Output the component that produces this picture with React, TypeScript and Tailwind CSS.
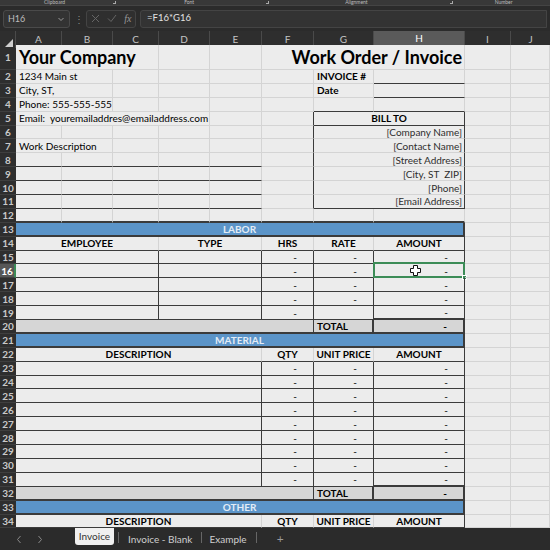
import React from 'react';

type Edge = 'g' | 'd' | 't';
type Align = 'l' | 'c' | 'r' | 'd';

const COLS =
  'grid grid-cols-[16px_46px_51px_46px_51px_52px_52px_60px_91px_46px_39px]';

const bottomCls: Record<Edge, string> = {
  g: 'border-b border-b-[#d4d4d4]',
  d: 'border-b border-b-[#3b3b3b]',
  t: 'border-b-2 border-b-[#3b3b3b]',
};
const rightCls: Record<Edge, string> = {
  g: 'border-r border-r-[#d4d4d4]',
  d: 'border-r border-r-[#3b3b3b]',
  t: 'border-r-2 border-r-[#3b3b3b]',
};
const spanCls: Record<number, string> = {
  1: 'col-span-1',
  2: 'col-span-2',
  3: 'col-span-3',
  4: 'col-span-4',
  5: 'col-span-5',
  6: 'col-span-6',
  8: 'col-span-8',
};
const alignCls: Record<Align, string> = {
  l: 'justify-start pl-[3px]',
  c: 'justify-center',
  r: 'justify-end pr-[2px]',
  d: 'justify-end pr-[16px]',
};

interface CellProps {
  span?: number;
  b?: Edge;
  r?: Edge;
  a?: Align;
  className?: string;
  children?: React.ReactNode;
}

const Cell: React.FC<CellProps> = ({ span = 1, b = 'g', r = 'g', a = 'l', className = '', children }) => (
  <div
    className={`${spanCls[span]} ${bottomCls[b]} ${rightCls[r]} ${alignCls[a]} relative flex min-w-0 items-center whitespace-pre ${className}`}
  >
    {children}
  </div>
);

const Row: React.FC<{ n: number; active?: boolean; tall?: boolean; children?: React.ReactNode }> = ({
  n,
  active,
  tall,
  children,
}) => (
  <div className={`${COLS} ${tall ? 'h-[25px]' : 'h-[13.9px]'}`}>
    <div
      className={`flex items-center justify-center border-b border-b-[#3f3f3f] text-[10px] font-bold ${
        active ? 'border-r-2 border-r-[#3c8c57] bg-[#575757] text-white' : 'bg-[#2e2e2e] text-[#c9c9c9]'
      }`}
    >
      {n}
    </div>
    {children}
    <Cell />
    <Cell />
  </div>
);

const Bar: React.FC<{ label: string }> = ({ label }) => (
  <Cell span={8} b="t" r="t" a="c" className="bg-[#5b94c8] text-[10px] font-bold text-[#e3ecf6]">
    {label}
  </Cell>
);

const Selection = () => (
  <>
    <div className="pointer-events-none absolute -left-[1px] -top-[2px] bottom-[-1px] right-[-1px] border-2 border-[#3c8c57]" />
    <div className="absolute -bottom-[3px] -right-[3px] h-[5px] w-[5px] border border-white bg-[#3c8c57]" />
    <svg className="absolute left-[36px] top-[1px]" width="11" height="11" viewBox="0 0 11 11">
      <path
        d="M3.5 0.5h4v3h3v4h-3v3h-4v-3h-3v-4h3z"
        fill="#fff"
        stroke="#111"
        strokeWidth="1"
      />
    </svg>
  </>
);

const Dash = '-';

const Chevron: React.FC<{ dir: 'l' | 'r' }> = ({ dir }) => (
  <svg width="6" height="9" viewBox="0 0 6 9">
    <path d={dir === 'l' ? 'M4.5 1L1.5 4.5 4.5 8' : 'M1.5 1l3 3.5-3 3.5'} fill="none" stroke="#8a8a8a" strokeWidth="1" />
  </svg>
);

export default function App() {
  const labor = [15, 16, 17, 18, 19];
  const material = [23, 24, 25, 26, 27, 28, 29, 30, 31];

  return (
    <div
      className="flex h-[550px] w-[550px] flex-col overflow-hidden bg-[#2b2b2b] text-black"
      style={{ fontFamily: 'Lato, "Open Sans", Arial, sans-serif' }}
    >
      {/* ribbon group labels */}
      <div className="flex h-[6px] items-center border-b border-[#444] bg-[#383838] text-[5px] leading-none text-[#bdbdbd]">
        <span className="ml-[44px]">Clipboard</span>
        <span className="ml-[48px] h-[3px] w-[3px] border-b border-r border-[#aaa]" />
        <span className="ml-[68px]">Font</span>
        <span className="ml-[72px] h-[3px] w-[3px] border-b border-r border-[#aaa]" />
        <span className="ml-[76px]">Alignment</span>
        <span className="ml-[82px] h-[3px] w-[3px] border-b border-r border-[#aaa]" />
        <span className="ml-[42px]">Number</span>
      </div>

      {/* formula bar */}
      <div className="flex h-[25px] items-center gap-[4px] px-[3px]">
        <div className="flex h-[18px] w-[67px] items-center justify-between rounded-[3px] border border-[#4a4a4a] bg-[#333] px-[4px] text-[9px] text-[#bcbcbc]">
          <span>H16</span>
          <svg width="8" height="8" viewBox="0 0 8 8">
            <path d="M1.5 3l2.5 2.5 2.5-2.5" fill="none" stroke="#999" strokeWidth="1" />
          </svg>
        </div>
        <span className="w-[8px] text-center text-[10px] leading-none text-[#888]">⋮</span>
        <div className="flex h-[18px] w-[50px] items-center justify-around rounded-[3px] border border-[#444] bg-[#2f2f2f] text-[#666]">
          <svg width="9" height="9" viewBox="0 0 9 9">
            <path d="M1 1l7 7M8 1l-7 7" stroke="#666" strokeWidth="1" />
          </svg>
          <svg width="10" height="9" viewBox="0 0 10 9">
            <path d="M1 4.5l3 3 5-6.5" fill="none" stroke="#666" strokeWidth="1" />
          </svg>
          <span className="text-[10px] italic leading-none text-[#999]" style={{ fontFamily: '"Liberation Serif", serif' }}>
            fx
          </span>
        </div>
        <div className="flex h-[18px] flex-1 items-center rounded-l-[3px] border border-[#444] bg-[#333] px-[6px] text-[9.5px] text-[#e2e2e2]">
          =F16*G16
        </div>
      </div>

      {/* column headers */}
      <div className={`${COLS} h-[14px] bg-[#2e2e2e] text-[10px] text-[#c4c4c4]`}>
        <div className="relative border-r border-[#4a4a4a]">
          <svg className="absolute bottom-[1px] right-[2px]" width="8" height="8" viewBox="0 0 8 8">
            <path d="M8 0v8h-8z" fill="#cfcfcf" />
          </svg>
        </div>
        {['A', 'B', 'C', 'D', 'E', 'F', 'G'].map((c) => (
          <div key={c} className="flex items-center justify-center border-r border-[#4a4a4a]">
            {c}
          </div>
        ))}
        <div className="flex items-center justify-center border-b-2 border-r border-b-[#3c8c57] border-r-[#4a4a4a] bg-[#5a5a5a] text-white">
          H
        </div>
        <div className="flex items-center justify-center border-r border-[#4a4a4a]">I</div>
        <div className="flex items-center justify-center">J</div>
      </div>

      {/* sheet */}
      <div className="bg-[#ececec] text-[10px] leading-none">
        <Row n={1} tall>
          <Cell span={3} className="text-[18px] font-bold">Your Company</Cell>
          <Cell />
          <Cell />
          <Cell span={3} a="r" className="text-[18px] font-bold">Work Order / Invoice</Cell>
        </Row>
        <Row n={2}>
          <Cell span={2}>1234 Main st</Cell>
          <Cell /><Cell /><Cell /><Cell />
          <Cell className="font-bold">INVOICE #</Cell>
          <Cell b="d" />
        </Row>
        <Row n={3}>
          <Cell span={2}>City, ST,</Cell>
          <Cell /><Cell /><Cell /><Cell />
          <Cell className="font-bold">Date</Cell>
          <Cell b="d" />
        </Row>
        <Row n={4}>
          <Cell span={2}>Phone: 555-555-555</Cell>
          <Cell /><Cell /><Cell /><Cell />
          <Cell b="d" />
          <Cell b="d" />
        </Row>
        <Row n={5}>
          <Cell span={4}>Email:  youremailaddres@emailaddress.com</Cell>
          <Cell />
          <Cell r="d" />
          <Cell span={2} b="d" r="d" a="c" className="font-bold">BILL TO</Cell>
        </Row>
        {['[Company Name]', '[Contact Name]', '[Street Address]', '[City, ST  ZIP]', '[Phone]', '[Email Address]'].map(
          (t, i) => {
            const n = i + 6;
            const line: Edge = n >= 8 ? 'd' : 'g';
            return (
              <Row n={n} key={n}>
                {n === 7 ? (
                  <Cell span={2}>Work Description</Cell>
                ) : (
                  <>
                    <Cell b={line} />
                    <Cell b={line} />
                  </>
                )}
                <Cell b={line} />
                <Cell b={line} />
                <Cell b={line} />
                <Cell r="d" />
                <Cell span={2} b={n === 11 ? 'd' : 'g'} r="d" a="r" className="text-[#2e2e2e]">
                  {t}
                </Cell>
              </Row>
            );
          }
        )}
        <Row n={12}>
          <Cell b="t" /><Cell b="t" /><Cell b="t" /><Cell b="t" /><Cell b="t" /><Cell b="t" /><Cell b="t" /><Cell b="t" />
        </Row>
        <Row n={13}>
          <Bar label="LABOR" />
        </Row>
        <Row n={14}>
          <Cell span={3} b="d" a="c" className="font-bold">EMPLOYEE</Cell>
          <Cell span={2} b="d" a="c" className="font-bold">TYPE</Cell>
          <Cell b="d" a="c" className="font-bold">HRS</Cell>
          <Cell b="d" a="c" className="font-bold">RATE</Cell>
          <Cell b="d" r="d" a="c" className="font-bold">AMOUNT</Cell>
        </Row>
        {labor.map((n) => (
          <Row n={n} key={n} active={n === 16}>
            <Cell span={3} b="d" r="d" />
            <Cell span={2} b="d" r="d" />
            <Cell b="d" r="d" a="d">{Dash}</Cell>
            <Cell b="d" r="d" a="d">{n === 19 ? '' : Dash}</Cell>
            <Cell b={n === 19 ? 't' : 'd'} r="d" a="d">
              {Dash}
              {n === 16 && <Selection />}
            </Cell>
          </Row>
        ))}
        <Row n={20}>
          <Cell span={6} b="t" r="d" className="bg-[#d6d6d6]" />
          <Cell b="t" r="t" className="bg-[#d6d6d6] font-bold">TOTAL</Cell>
          <Cell b="t" r="t" a="d" className="bg-[#d6d6d6] font-bold">{Dash}</Cell>
        </Row>
        <Row n={21}>
          <Bar label="MATERIAL" />
        </Row>
        <Row n={22}>
          <Cell span={5} b="d" a="c" className="font-bold">DESCRIPTION</Cell>
          <Cell b="d" a="c" className="font-bold">QTY</Cell>
          <Cell b="d" a="c" className="font-bold">UNIT PRICE</Cell>
          <Cell b="d" r="d" a="c" className="font-bold">AMOUNT</Cell>
        </Row>
        {material.map((n) => (
          <Row n={n} key={n}>
            <Cell span={5} b="d" r="d" />
            <Cell b="d" r="d" a="d">{Dash}</Cell>
            <Cell b="d" r="d" a="d">{Dash}</Cell>
            <Cell b={n === 31 ? 't' : 'd'} r="d" a="d">{Dash}</Cell>
          </Row>
        ))}
        <Row n={32}>
          <Cell span={6} b="t" r="d" className="bg-[#d6d6d6]" />
          <Cell b="t" r="t" className="bg-[#d6d6d6] font-bold">TOTAL</Cell>
          <Cell b="t" r="t" a="d" className="bg-[#d6d6d6] font-bold">{Dash}</Cell>
        </Row>
        <Row n={33}>
          <Bar label="OTHER" />
        </Row>
        <Row n={34}>
          <Cell span={5} b="d" a="c" className="font-bold">DESCRIPTION</Cell>
          <Cell b="d" a="c" className="font-bold">QTY</Cell>
          <Cell b="d" a="c" className="font-bold">UNIT PRICE</Cell>
          <Cell b="d" r="d" a="c" className="font-bold">AMOUNT</Cell>
        </Row>
      </div>

      {/* sheet tabs */}
      <div className="flex flex-1 items-start bg-[#2b2b2b] text-[10px] text-[#cfcfcf]">
        <span className="ml-[16px] mt-[7px] flex">
          <Chevron dir="l" />
        </span>
        <span className="ml-[15px] mt-[7px] flex">
          <Chevron dir="r" />
        </span>
        <div className="ml-[32px] flex h-[17px] w-[39px] flex-col items-center justify-center rounded-b-[3px] bg-[#f0f0f0] text-[#333]">
          <span className="mt-[1px]">Invoice</span>
          <span className="mt-[1px] h-[2px] w-[28px] bg-[#3c8c57]" />
        </div>
        <span className="ml-[4px] mt-[4px] h-[11px] w-px bg-[#666]" />
        <span className="ml-[9px] mt-[4px]">Invoice - Blank</span>
        <span className="ml-[9px] mt-[4px] h-[11px] w-px bg-[#666]" />
        <span className="ml-[7px] mt-[4px]">Example</span>
        <span className="ml-[9px] mt-[4px] h-[11px] w-px bg-[#666]" />
        <span className="ml-[20px] mt-[2px] text-[12px] text-[#9a9a9a]">+</span>
      </div>
    </div>
  );
}
